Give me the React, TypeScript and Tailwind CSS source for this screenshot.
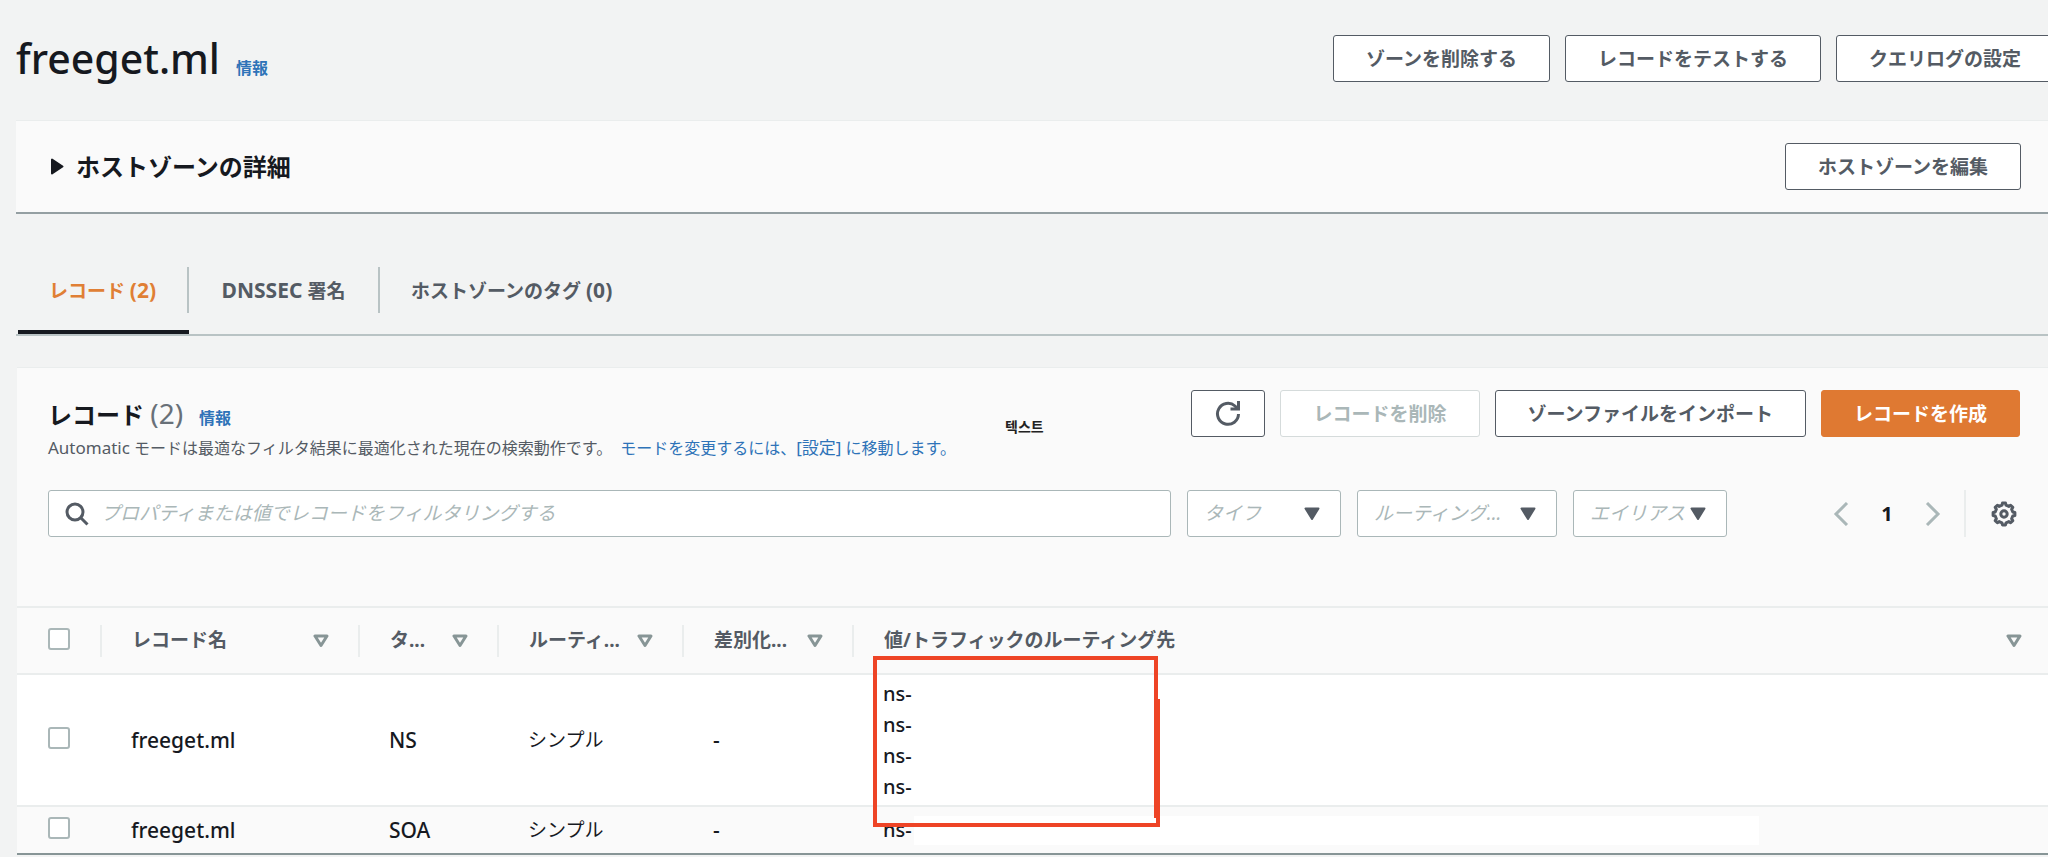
import type { ReactNode } from 'react';

const fontStack = "font-['Noto_Sans','Noto_Sans_CJK_JP','Noto_Sans_CJK_KR',sans-serif]";

type ButtonProps = {
    children: ReactNode;
    variant?: 'normal' | 'primary' | 'disabled';
};

const buttonVariants = {
    normal: 'border-[#545b64] bg-white text-[#545b64]',
    primary: 'border-[#df7932] bg-[#df7932] text-white',
    disabled: 'border-[#d5dbdb] bg-white text-[#aab7b8]',
};

function Button({ children, variant = 'normal' }: ButtonProps) {
    return (
        <button
            type="button"
            disabled={variant === 'disabled'}
            className={`h-[47px] shrink-0 whitespace-nowrap rounded-[3px] border px-8 text-[19px] font-bold leading-6 ${buttonVariants[variant]}`}
        >
            {children}
        </button>
    );
}

function RefreshIcon() {
    return (
        <svg className="h-[27px] w-[27px]" viewBox="0 0 27 27" fill="none" stroke="#545b64" strokeWidth="3">
            <path d="M23.500 14A10.500 10.500 0 1 1 20 6L22.500 8.500" />
            <path d="M23.500 1V9H15.500" />
        </svg>
    );
}

function SearchIcon() {
    return (
        <svg className="h-6 w-6 shrink-0" viewBox="0 0 24 24" fill="none" stroke="#545b64" strokeWidth="3">
            <circle cx="10" cy="10" r="8" />
            <path d="M15.500 15.500L22.500 22.500" />
        </svg>
    );
}

function GearIcon() {
    // eight flat teeth around the rim
    const points: string[] = [];
    for (let i = 0; i < 8; i++) {
        const steps = [[-8, 11], [8, 11], [13, 9], [32, 9]];
        steps.forEach(([offset, radius]) => {
            const angle = ((i * 45 + offset) * Math.PI) / 180;
            points.push(`${13 + radius * Math.sin(angle)},${13 - radius * Math.cos(angle)}`);
        });
    }
    return (
        <svg className="h-[26px] w-[26px]" viewBox="0 0 26 26" fill="none" stroke="#545b64" strokeWidth="3" strokeLinejoin="round">
            <polygon points={points.join(' ')} />
            <circle cx="13" cy="13" r="3.200" />
        </svg>
    );
}

function SortIcon() {
    return (
        <svg className="h-[14px] w-4 shrink-0" viewBox="0 0 16 14" fill="none" stroke="#879596" strokeWidth="3" strokeLinejoin="round">
            <path d="M2 2H14L8 11.500Z" />
        </svg>
    );
}

function FilterSelect({ label, name, width }: { label: string; name: string; width: string }) {
    return (
        <div className={`relative shrink-0 ${width}`}>
            <select
                aria-label={name}
                className="h-[47px] w-full appearance-none rounded-[3px] border border-[#aab7b8] bg-white pl-4 text-[19px] italic text-[#aab7b8]"
            >
                <option>{label}</option>
            </select>
            <svg className="pointer-events-none absolute right-[21px] top-[17px] h-[14px] w-4" viewBox="0 0 16 14">
                <path d="M1.500 1.500H14.500L8 12Z" fill="#545b64" stroke="#545b64" strokeWidth="2" strokeLinejoin="round" />
            </svg>
        </div>
    );
}

function Checkbox({ label }: { label: string }) {
    return (
        <input
            type="checkbox"
            aria-label={label}
            className="block h-[22px] w-[22px] appearance-none rounded-[3px] border-2 border-[#aab7b8] bg-white"
        />
    );
}

function PageHeader() {
    return (
        <header className="-mr-[6px] flex items-center justify-between pt-[35px]">
            <div className="flex items-baseline gap-4">
                <h1 className="text-[41px] font-medium leading-[47px] text-[#16191f]">freeget.ml</h1>
                <a href="#info" className="text-base font-bold text-[#2e73b8]">情報</a>
            </div>
            <div className="flex gap-[15px]">
                <Button>ゾーンを削除する</Button>
                <Button>レコードをテストする</Button>
                <Button>クエリログの設定</Button>
            </div>
        </header>
    );
}

function ZoneDetails() {
    return (
        <section className="mt-[38px] flex items-center justify-between border-b-2 border-t border-b-[#949fa2] border-t-[#eaeded] bg-[#fafafa] py-[22px] pl-[34px] pr-[27px]">
            <h2 className="flex items-center gap-3 text-2xl font-bold text-[#16191f]">
                <svg className="h-[17px] w-[14px]" viewBox="0 0 14 17">
                    <path d="M2 1.500V15.500L12.500 8.500Z" fill="#16191f" stroke="#16191f" strokeWidth="2" strokeLinejoin="round" />
                </svg>
                ホストゾーンの詳細
            </h2>
            <Button>ホストゾーンを編集</Button>
        </section>
    );
}

function Tabs() {
    return (
        <nav className="mt-[53px] flex border-b-2 border-[#b9c3c4] text-[19px] font-bold leading-[46px] text-[#545b64]">
            <button type="button" className="ml-[2px] w-[171px] border-b-4 border-[#16191f] pb-[17px] text-[#e07f35]">
                <span className="block h-[46px] border-r-2 border-[#b9c3c4]">レコード <span className="text-[21px]">(2)</span></span>
            </button>
            <button type="button" className="w-[191px] border-b-4 border-transparent pb-[17px]">
                <span className="block h-[46px] border-r-2 border-[#b9c3c4]"><span className="text-[21px]">DNSSEC</span> 署名</span>
            </button>
            <button type="button" className="border-b-4 border-transparent px-[31px] pb-[17px]">
                <span className="block h-[46px]">ホストゾーンのタグ <span className="text-[21px]">(0)</span></span>
            </button>
        </nav>
    );
}

function RecordsToolbar() {
    return (
        <div className="relative flex justify-between">
            <div>
                <div className="flex h-[46px] items-baseline gap-4">
                    <h2 className="text-2xl font-bold leading-[46px] text-[#16191f]">
                        レコード <span className="text-[28px] font-normal text-[#687078]">(2)</span>
                    </h2>
                    <a href="#records-info" className="text-base font-bold text-[#2e73b8]">情報</a>
                </div>
                <p className="h-6 text-base leading-6 text-[#545b64]">
                    <span className="text-[17px]">Automatic</span> モードは最適なフィルタ結果に最適化された現在の検索動作です。
                    <a href="#settings" className="ml-2 text-[#2e73b8]">モードを変更するには、<span className="text-[17px]">[設定]</span> に移動します。</a>
                </p>
            </div>
            <div className="flex gap-[15px]">
                <button type="button" aria-label="更新" className="flex h-[47px] w-[74px] items-center justify-center rounded-[3px] border border-[#545b64] bg-white">
                    <RefreshIcon />
                </button>
                <Button variant="disabled">レコードを削除</Button>
                <Button>ゾーンファイルをインポート</Button>
                <Button variant="primary">レコードを作成</Button>
            </div>
            {/* stray label floating over the toolbar */}
            <span className="absolute left-[957px] top-[27px] text-sm font-bold text-[#222222]">텍스트</span>
        </div>
    );
}

function RecordsFilters() {
    return (
        <div className="mt-[30px] flex items-center">
            <label className="flex h-[47px] flex-1 items-center gap-3 rounded-[3px] border border-[#aab7b8] bg-white pl-4">
                <SearchIcon />
                <input
                    type="text"
                    aria-label="レコードをフィルタリング"
                    placeholder="プロパティまたは値でレコードをフィルタリングする"
                    className="w-full bg-transparent text-[19px] placeholder:italic placeholder:text-[#aab7b8]"
                />
            </label>
            <div className="ml-4 flex gap-4">
                <FilterSelect name="タイプ" label="タイフ" width="w-[154px]" />
                <FilterSelect name="ルーティングポリシー" label="ルーティング..." width="w-[200px]" />
                <FilterSelect name="エイリアス" label="エイリアス" width="w-[154px]" />
            </div>
            <div className="ml-[106px] mr-[3px] flex items-center">
                <button type="button" aria-label="前のページ">
                    <svg className="h-6 w-4" viewBox="0 0 16 24" fill="none" stroke="#aab7b8" strokeWidth="3">
                        <path d="M14 1L3 12L14 23" />
                    </svg>
                </button>
                <button type="button" className="w-[76px] text-xl font-bold text-[#16191f]">1</button>
                <button type="button" aria-label="次のページ">
                    <svg className="h-6 w-4" viewBox="0 0 16 24" fill="none" stroke="#aab7b8" strokeWidth="3">
                        <path d="M2 1L13 12L2 23" />
                    </svg>
                </button>
                <button type="button" aria-label="設定" className="ml-[23px] flex h-[47px] items-center border-l-2 border-[#eaeded] pl-[25px]">
                    <GearIcon />
                </button>
            </div>
        </div>
    );
}

function HeaderCell({ label, gap }: { label: string; gap: string }) {
    return (
        <th className="p-0 font-bold">
            <div className={`flex h-8 items-center justify-between border-l-2 border-[#eaeded] pl-[30px] text-[#545b64] ${gap}`}>
                <span className="whitespace-nowrap">{label}</span>
                <SortIcon />
            </div>
        </th>
    );
}

function RecordsTable() {
    return (
        <table className="mt-[69px] w-full table-fixed border-b-2 border-t-2 border-b-[#879596] border-t-[#eaeded] text-left text-[19px] leading-[31px] text-[#16191f]">
            <colgroup>
                <col className="w-[83px]" />
                <col className="w-[258px]" />
                <col className="w-[139px]" />
                <col className="w-[185px]" />
                <col className="w-[170px]" />
                <col />
            </colgroup>
            <thead>
                <tr className="h-[67px] border-b-2 border-[#eaeded]">
                    <th className="pl-[31px] pb-1"><Checkbox label="すべて選択" /></th>
                    <HeaderCell label="レコード名" gap="pr-[29px]" />
                    <HeaderCell label="タ..." gap="pr-[29px]" />
                    <HeaderCell label="ルーティ..." gap="pr-[29px]" />
                    <HeaderCell label="差別化..." gap="pr-[29px]" />
                    <HeaderCell label="値/トラフィックのルーティング先" gap="pr-[26px]" />
                </tr>
            </thead>
            <tbody>
                <tr className="h-[132px] border-b-2 border-[#eaeded] bg-white">
                    <td className="pl-[31px] pb-1"><Checkbox label="freeget.ml NS" /></td>
                    <td className="pl-[31px] text-[21px] font-medium">freeget.ml</td>
                    <td className="pl-[31px] text-[21px] font-medium">NS</td>
                    <td className="pl-[31px]">シンプル</td>
                    <td className="pl-[31px] text-[21px] font-medium">-</td>
                    <td className="relative pl-[31px] text-xl font-medium leading-[31px]">
                        <div>ns-</div>
                        <div>ns-</div>
                        <div>ns-</div>
                        <div>ns-</div>
                        <svg className="pointer-events-none absolute -top-[19px] left-[21px] z-10 h-[171px] w-[287px]" viewBox="0 0 287 171" fill="none" stroke="#ee4426" strokeWidth="4">
                            <path d="M284 2H2V169H285V43" />
                            <path d="M283 0V162" />
                        </svg>
                    </td>
                </tr>
                <tr className="h-[48px] bg-[#fafafa]">
                    <td className="pl-[31px] pb-1"><Checkbox label="freeget.ml SOA" /></td>
                    <td className="pl-[31px] text-[21px] font-medium">freeget.ml</td>
                    <td className="pl-[31px] text-[21px] font-medium">SOA</td>
                    <td className="pl-[31px]">シンプル</td>
                    <td className="pl-[31px] text-[21px] font-medium">-</td>
                    <td className="pl-[31px] text-xl font-medium">
                        <div className="flex items-center gap-[2px]">
                            ns-
                            <span className="h-[29px] w-[845px] bg-white" />
                        </div>
                    </td>
                </tr>
            </tbody>
        </table>
    );
}

export default function App() {
    return (
        <main className={`min-h-screen overflow-hidden bg-[#f2f3f3] pl-4 ${fontStack}`}>
            <PageHeader />
            <ZoneDetails />
            <Tabs />
            <section className="ml-px mt-[31px] border-t border-[#eaeded] bg-[#fafafa]">
                <div className="pl-[31px] pr-7 pt-[22px]">
                    <RecordsToolbar />
                    <RecordsFilters />
                </div>
                <RecordsTable />
            </section>
        </main>
    );
}
